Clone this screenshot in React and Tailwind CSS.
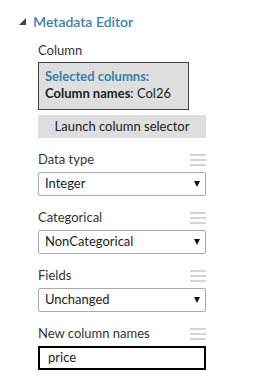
const Grip = () => (
  <div className="flex flex-col gap-[3px] w-[16px]">
    <span className="block h-[2px] bg-[#d4d4d4]" />
    <span className="block h-[2px] bg-[#d4d4d4]" />
    <span className="block h-[2px] bg-[#d4d4d4]" />
  </div>
);

const Field = ({ label, children }) => (
  <div className="mt-[12px]">
    <div className="flex items-center justify-between h-[20px] mb-[2px]">
      <span className="text-[13px] text-[#333]">{label}</span>
      <Grip />
    </div>
    {children}
  </div>
);

const Select = ({ value }) => (
  <div className="flex items-center justify-between h-[24px] border border-[#aaa] rounded-[2px] bg-white pl-[6px] pr-[5px]">
    <span className="text-[13px] text-[#222]">{value}</span>
    <svg width="6" height="6" viewBox="0 0 6 6">
      <polygon points="0,0 6,0 3,6" fill="#111" />
    </svg>
  </div>
);

const App = () => {
  const fields = [
    { label: "Data type", value: "Integer" },
    { label: "Categorical", value: "NonCategorical" },
    { label: "Fields", value: "Unchanged" },
  ];

  return (
    <div
      className="w-[254px] h-[386px] bg-white pt-[12px]"
      style={{ fontFamily: 'Lato, "Noto Sans", sans-serif' }}
    >
      <div className="flex items-center h-[18px] pl-[19px]">
        <svg width="7" height="7" viewBox="0 0 7 7" className="mr-[7px] mt-[1px]">
          <polygon points="7,0 7,7 0,7" fill="#444" />
        </svg>
        <span className="text-[14px] font-semibold text-[#3a7fab]">Metadata Editor</span>
      </div>
      <div className="pl-[38px] w-[206px]">
        <div className="h-[20px] mt-[11px] mb-[1px] flex items-center text-[13px] text-[#333]">Column</div>
        <div className="w-[151px] h-[48px] border border-[#444] bg-[#dedede] px-[6px] pt-[5px] text-[13px] leading-[17px] whitespace-nowrap">
          <div className="font-bold text-[#3a7fab]">Selected columns:</div>
          <div className="text-[#222]">
            <span className="font-bold">Column names</span>: Col26
          </div>
        </div>
        <div className="mt-[5px] h-[23px] w-[168px] bg-[#dedede] flex items-center justify-center text-[13px] text-[#222]">
          Launch column selector
        </div>
        {fields.map((f) => (
          <Field key={f.label} label={f.label}>
            <Select value={f.value} />
          </Field>
        ))}
        <Field label="New column names">
          <div className="h-[24px] border-2 border-black flex items-center pl-[8px] text-[13px] text-[#222]">
            price
          </div>
        </Field>
      </div>
    </div>
  );
};

export default App;
